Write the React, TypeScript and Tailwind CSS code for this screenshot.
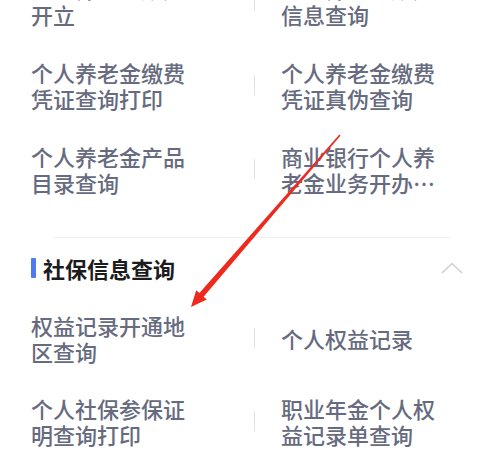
import React from "react";

type Row = { left: string[]; right: string[] };

const topRows: Row[] = [
  { left: ["个人养老金账户", "开立"], right: ["个人养老金账户", "信息查询"] },
  { left: ["个人养老金缴费", "凭证查询打印"], right: ["个人养老金缴费", "凭证真伪查询"] },
  { left: ["个人养老金产品", "目录查询"], right: ["商业银行个人养", "老金业务开办…"] },
];

const bottomRows: Row[] = [
  { left: ["权益记录开通地", "区查询"], right: ["个人权益记录"] },
  { left: ["个人社保参保证", "明查询打印"], right: ["职业年金个人权", "益记录单查询"] },
];

function Lines({ lines }: { lines: string[] }) {
  return (
    <div className="flex flex-col">
      {lines.map((l, i) => (
        <span key={i} className="block whitespace-nowrap">
          {l}
        </span>
      ))}
    </div>
  );
}

function ItemRow({ row }: { row: Row }) {
  return (
    <div className="flex h-[52px] items-center pl-[31px] text-[22px] font-medium leading-[26px] text-[#666b80]">
      <div className="w-[223px]">
        <Lines lines={row.left} />
      </div>
      <div className="h-[20px] w-px bg-[#e2e2e6]" />
      <div className="pl-[26px]">
        <Lines lines={row.right} />
      </div>
    </div>
  );
}

export default function App() {
  return (
    <div
      className="relative h-[476px] w-[478px] overflow-hidden bg-white"
      style={{ fontFamily: '"Noto Sans CJK SC", "Noto Sans", sans-serif' }}
    >
      <div className="-mt-[25px] flex flex-col gap-[32px]">
        {topRows.map((r, i) => (
          <ItemRow key={i} row={r} />
        ))}
      </div>

      <div className="ml-[53px] mt-[42px] h-px w-[398px] bg-[#f0f0f3]" />

      <div className="mt-[17px] flex h-[26px] items-center pl-[31px] pr-[15px]">
        <div className="h-[20px] w-[5px] rounded-[1px] bg-[#4d7cf0]" />
        <div className="ml-[7px] text-[22px] font-bold leading-[26px] text-[#1c1c1e]">
          社保信息查询
        </div>
        <div className="ml-auto flex items-center">
          <svg width="22" height="12" viewBox="0 0 22 12">
            <polyline
              points="1,11 11,1.5 21,11"
              fill="none"
              stroke="#cfcfd4"
              strokeWidth="1.6"
            />
          </svg>
        </div>
      </div>

      <div className="mt-[31px] flex flex-col gap-[31px]">
        {bottomRows.map((r, i) => (
          <ItemRow key={i} row={r} />
        ))}
      </div>

      <svg
        className="pointer-events-none absolute left-0 top-0"
        width="478"
        height="476"
        viewBox="0 0 478 476"
      >
        <polygon
          points="340.6,135.5 203.6,296.7 206.8,299.5 191,307 196.2,290.3 199.4,293.1 339.4,134.5"
          fill="#ee2a1f"
        />
      </svg>
    </div>
  );
}
